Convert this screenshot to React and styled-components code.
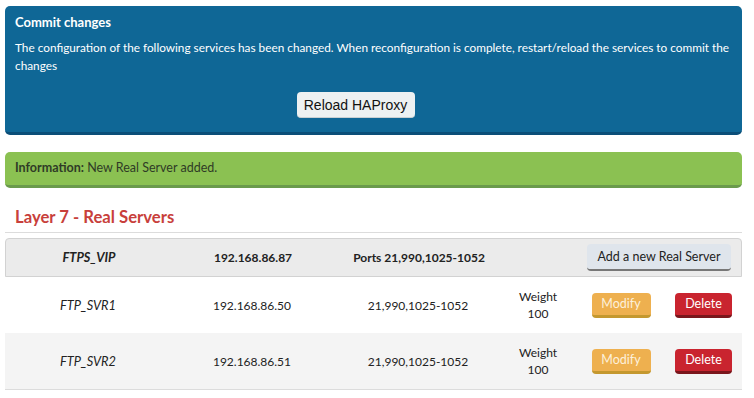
import React from 'react'
import styled, { createGlobalStyle } from 'styled-components'

const servers = [
    { name: 'FTP_SVR1', ip: '192.168.86.50', ports: '21,990,1025-1052', weight: 100 },
    { name: 'FTP_SVR2', ip: '192.168.86.51', ports: '21,990,1025-1052', weight: 100 },
]

const App = () => {
    return (
        <Page>
            <GlobalStyle />
            <CommitPanel>
                <PanelTitle>Commit changes</PanelTitle>
                <PanelText>
                    The configuration of the following services has been
                    changed. When reconfiguration is complete, restart/reload
                    the services to commit the changes
                </PanelText>
                <CommitActions>
                    <ReloadButton>Reload HAProxy</ReloadButton>
                </CommitActions>
            </CommitPanel>

            <InfoPanel>
                <b>Information:</b> New Real Server added.
            </InfoPanel>

            <SectionHeading>Layer 7 - Real Servers</SectionHeading>

            <Table>
                <HeaderRow>
                    <Cell italic>FTPS_VIP</Cell>
                    <Cell>192.168.86.87</Cell>
                    <Cell>Ports 21,990,1025-1052</Cell>
                    <HeaderAction>
                        <AddButton>Add a new Real Server</AddButton>
                    </HeaderAction>
                </HeaderRow>
                {servers.map((s, i) => (
                    <ServerRow key={s.name} striped={i % 2 === 1}>
                        <Cell italic>{s.name}</Cell>
                        <Cell>{s.ip}</Cell>
                        <Cell>{s.ports}</Cell>
                        <Cell>
                            Weight
                            <br />
                            {s.weight}
                        </Cell>
                        <Cell>
                            <ActionButton variant="modify">Modify</ActionButton>
                        </Cell>
                        <Cell>
                            <ActionButton variant="delete">Delete</ActionButton>
                        </Cell>
                    </ServerRow>
                ))}
            </Table>
        </Page>
    )
}

const GlobalStyle = createGlobalStyle`
    html, body {
        margin: 0;
        padding: 0;
        background: #fff;
    }

    body {
        font-family: Lato, "Open Sans", sans-serif;
        font-size: 12px;
        color: #222;
    }
`

const Page = styled('div')`
    padding: 6px 12px 0 5px;
    width: 737px;
`

const CommitPanel = styled('section')`
    background: #0f6796;
    border-bottom: 3px solid #0b4e78;
    border-radius: 5px;
    color: #fff;
    padding: 8px 8px 14px 10px;
`

const PanelTitle = styled('h2')`
    font-size: 13px;
    font-weight: 700;
    line-height: 16px;
    margin: 0 0 9px;
`

const PanelText = styled('p')`
    font-size: 11.8px;
    line-height: 18px;
    margin: 0;
`

const CommitActions = styled('div')`
    display: flex;
    justify-content: center;
    margin-top: 17px;
    /* The button sits a little left of the panel's centre. */
    padding-right: 38px;
`

const ReloadButton = styled('button')`
    background: #edf1f2;
    border: 0;
    border-bottom: 1px solid #c9d0d3;
    border-radius: 4px;
    color: #111;
    font-family: "Liberation Sans", Arial, sans-serif;
    font-size: 14px;
    height: 26px;
    padding: 0;
    width: 118px;
`

const InfoPanel = styled('div')`
    background: #8bc152;
    border-bottom: 3px solid #6a9a4c;
    border-radius: 5px;
    color: #2f3b26;
    font-size: 12.5px;
    line-height: 16px;
    margin-top: 17px;
    padding: 8px 10px 9px;

    b {
        font-weight: 700;
    }
`

const SectionHeading = styled('h1')`
    border-bottom: 1px solid #dcdcdc;
    color: #c8403b;
    font-size: 16.7px;
    font-weight: 700;
    line-height: 20px;
    margin: 19px 0 0;
    padding: 0 10px 5px;
`

const Table = styled('div')`
    margin-top: 5px;
    border-bottom: 1px solid #dcdcdc;
`

const columns = '166px 162px 170px 70px 96px 69px'

const HeaderRow = styled('div')`
    align-items: center;
    background: #ebebeb;
    border: 1px solid #d2d2d2;
    border-radius: 4px 4px 0 0;
    display: grid;
    font-weight: 700;
    grid-template-columns: ${columns} 1fr;
    height: 37px;
`

const HeaderAction = styled('div')`
    display: flex;
    grid-column: 4 / -1;
    justify-content: flex-end;
    padding-right: 10px;
`

const ServerRow = styled('div')`
    align-items: center;
    background: ${({ striped }) => (striped ? '#f4f4f4' : '#fff')};
    display: grid;
    grid-template-columns: ${columns} 1fr;
    height: 56px;
`

const Cell = styled('div')`
    font-size: ${({ italic }) => (italic ? '12.8px' : '12px')};
    font-style: ${({ italic }) => (italic ? 'italic' : 'normal')};
    line-height: 17px;
    text-align: center;
`

const AddButton = styled('button')`
    background: #dfe5ec;
    border: 0;
    border-bottom: 2px solid #777;
    border-radius: 4px;
    color: #222;
    font-family: Lato, "Open Sans", sans-serif;
    font-size: 12.5px;
    height: 27px;
    padding: 0;
    white-space: nowrap;
    width: 144px;
`

const ActionButton = styled('button')`
    background: ${({ variant }) => (variant === 'delete' ? '#c9242f' : '#eeb04f')};
    border: 0;
    border-bottom: 3px solid
        ${({ variant }) => (variant === 'delete' ? '#7a161c' : '#c4982f')};
    border-radius: 4px;
    color: ${({ variant }) => (variant === 'delete' ? '#fff' : '#fdf1dc')};
    font-family: Lato, "Open Sans", sans-serif;
    font-size: 12.5px;
    height: 25px;
    padding: 0;
    width: ${({ variant }) => (variant === 'delete' ? '57px' : '59px')};
`

export default App
